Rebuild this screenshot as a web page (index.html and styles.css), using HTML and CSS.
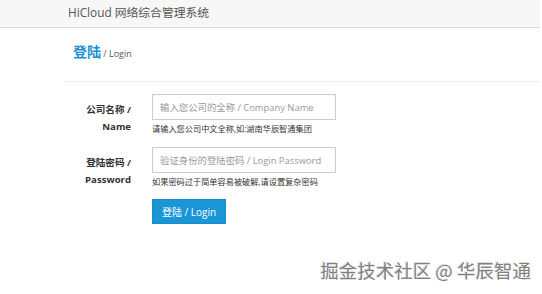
FILE: index.html
```html
<!DOCTYPE html>
<html>
<head>
<meta charset="utf-8">
<link rel="stylesheet" href="styles.css">
</head>
<body>
<div class="page">
  <div class="navbar"><span class="brand">HiCloud 网络综合管理系统</span></div>
  <div class="content">
    <div class="header"><span class="title">登陆</span><small class="sub"> / Login</small></div>
    <form class="form">
      <div class="row">
        <label class="label">公司名称 /<br>Name</label>
        <div class="field">
          <input class="input" type="text" placeholder="输入您公司的全称 / Company Name">
          <div class="help">请输入您公司中文全称,如:湖南华辰智通集团</div>
        </div>
      </div>
      <div class="row">
        <label class="label">登陆密码 /<br>Password</label>
        <div class="field">
          <input class="input" type="password" placeholder="验证身份的登陆密码 / Login Password">
          <div class="help">如果密码过于简单容易被破解,请设置复杂密码</div>
        </div>
      </div>
      <div class="actions"><button class="btn" type="button">登陆 / Login</button></div>
    </form>
  </div>
  <div class="watermark">掘金技术社区 @ 华辰智通</div>
</div>
</body>
</html>
```
FILE: styles.css
```css
* { box-sizing: border-box; }
html, body { margin: 0; padding: 0; background: #fff; }
body {
  font-family: "Open Sans", "Noto Sans CJK SC", sans-serif;
  color: #333;
  width: 542px;
  height: 294px;
  overflow: hidden;
  position: relative;
}
.page { width: 540px; }
.navbar {
  height: 28px;
  background: #f7f7f7;
  border-bottom: 1px solid #dcdcdc;
  padding-left: 68px;
  display: flex;
  align-items: center;
}
.brand {
  font-size: 11.8px;
  color: #555;
  line-height: 1;
  margin-top: -2px;
}
.content { margin-left: 64px; }
.header {
  padding: 12px 0 0 9px;
  height: 54px;
  border-bottom: 1px solid #eee;
}
.title { font-size: 14px; font-weight: bold; color: #1a8fd6; font-family: "Noto Sans CJK SC", sans-serif; }
.sub { font-size: 9px; color: #555; }
.form { padding-top: 12px; }
.row { display: flex; height: 53px; }
.label {
  width: 67px;
  text-align: right;
  font-weight: bold;
  font-size: 9.6px;
  line-height: 17px;
  padding-top: 7px;
  color: #333;
}
.field { margin-left: 21px; }
.input {
  display: block;
  width: 184px;
  height: 26px;
  border: 1px solid #ccc;
  padding: 0 7px;
  font-size: 9.4px;
  font-family: "Open Sans", "Noto Sans CJK SC", sans-serif;
  color: #555;
}
.input::placeholder { color: #999; }
.help { font-size: 8.2px; color: #333; margin-top: 3px; line-height: 12px; }
.actions { margin-left: 88px; margin-top: -1px; }
.btn {
  width: 74px;
  height: 25px;
  background: #1a96d6;
  border: 1px solid #1a8ccc;
  color: #fff;
  font-size: 10px;
  font-family: "Open Sans", "Noto Sans CJK SC", sans-serif;
  padding: 0;
}
.watermark {
  position: absolute;
  right: 11px;
  bottom: 11px;
  font-size: 18.5px;
  color: #808080;
  text-shadow: 1px 1px 0 #fff, -1px -1px 0 #e0e0e0;
  font-family: "Noto Sans CJK SC", sans-serif;
}
```
